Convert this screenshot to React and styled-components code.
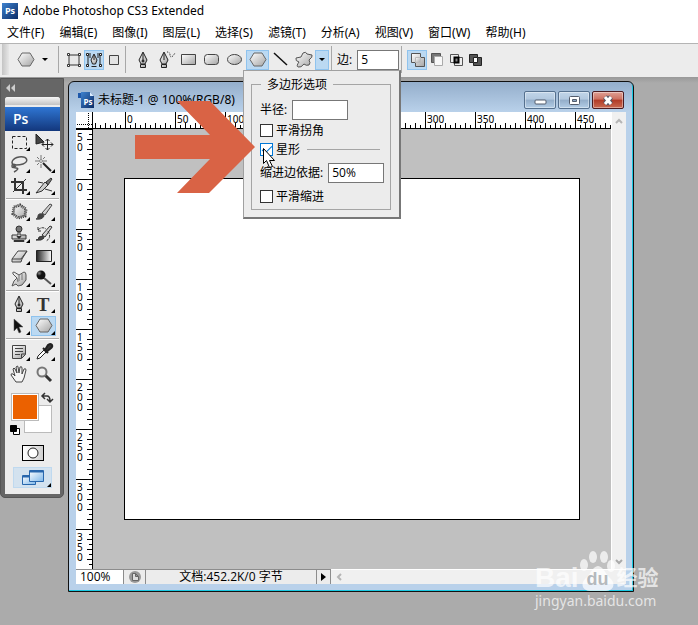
import React from 'react';
import styled, { createGlobalStyle, css } from 'styled-components';

const GlobalStyle = createGlobalStyle`
    * {
        box-sizing: border-box;
    }

    body {
        margin: 0;
        background: #ababab;
        color: #000;
        font-family: 'Open Sans', 'Noto Sans CJK SC', sans-serif;
        font-size: 12px;
        line-height: 16px;
    }

    button, input {
        font: inherit;
        color: inherit;
    }
`;

const Page = styled.div`
    display: flex;
    flex-direction: column;
    min-height: 100vh;
    overflow: hidden;
    position: relative;
`;

const Defs = styled.svg`
    position: absolute;
    width: 0;
    height: 0;
`;

const Icon = styled.svg`
    display: block;
    flex: none;
    overflow: visible;
`;

/* ---------- title and menu ---------- */

const TitleBar = styled.header`
    display: flex;
    align-items: center;
    gap: 5px;
    height: 22px;
    padding: 0 2px;
    background: #fff;
`;

const AppTitle = styled.h1`
    margin: 0;
    font-family: 'Noto Sans', sans-serif;
    font-size: 12px;
    font-weight: 400;
`;

const MenuBar = styled.nav`
    display: flex;
    gap: 15px;
    height: 21px;
    padding: 0 7px;
    background: #fff;
    font-family: 'Noto Sans', 'Noto Sans CJK SC', sans-serif;
`;

const MenuItem = styled.button`
    border: 0;
    padding: 0;
    background: none;
    white-space: nowrap;
`;

/* ---------- options bar ---------- */

const OptionsBar = styled.div`
    display: flex;
    align-items: center;
    height: 34px;
    border-top: 1px solid #b4b4b4;
    padding-bottom: 2px;
    background: #ececec;
    position: relative;
    z-index: 2;
`;

const Grip = styled.div`
    width: 7px;
    height: 100%;
    margin-left: 2px;
    background: linear-gradient(90deg, #c4c4c4, #e6e6e6);
`;

const Divider = styled.span`
    width: 1px;
    height: 27px;
    margin: 0 5px 0 2px;
    background: #a8a8a8;
`;

const PresetButton = styled.button`
    display: flex;
    align-items: center;
    gap: 7px;
    width: 47px;
    height: 20px;
    border: 0;
    padding: 0 0 0 8px;
    background: none;
`;

const Tool = styled.button`
    display: flex;
    align-items: center;
    justify-content: center;
    flex: none;
    width: ${({ $w }) => $w || 23}px;
    height: ${({ $h }) => $h || 20}px;
    border: 1px solid transparent;
    padding: 0;
    background: none;
    position: relative;
    ${({ $active }) =>
        $active &&
        css`
            border-color: #8fc3ee;
            background: #bbd9f2;
        `}
`;

const SidesLabel = styled.label`
    display: flex;
    align-items: center;
    gap: 5px;
`;

const NumberInput = styled.input`
    width: ${({ $w }) => $w}px;
    height: 20px;
    border: 1px solid #777;
    padding: 0 3px;
    background: #fff;
`;

const PopupAnchor = styled.div`
    position: relative;
`;

const Popup = styled.div`
    position: absolute;
    top: 20px;
    left: -3px;
    width: 158px;
    border: 1px solid #a0a0a0;
    border-right: 2px solid #777;
    border-bottom: 2px solid #777;
    padding: 6px 8px 7px 7px;
    background: #ececec;
`;

const Options = styled.fieldset`
    min-width: 0;
    margin: 0;
    border: 1px solid #a5a5a5;
    padding: 8px 6px 4px 8px;
`;

const Legend = styled.legend`
    margin-left: 1px;
    padding: 0 6px;
`;

const Row = styled.div`
    display: flex;
    align-items: center;
    gap: 5px;
    height: ${({ $h }) => $h}px;
    white-space: nowrap;
`;

const CheckLabel = styled.label`
    display: flex;
    align-items: center;
    gap: 3px;
`;

const Check = styled.input`
    appearance: none;
    width: 13px;
    height: 13px;
    margin: 0;
    border: 1px solid #333;
    background: #fff;

    &:checked {
        border-color: #0078d7;
    }

    &:checked::after {
        content: '';
        display: block;
        width: 9px;
        height: 4px;
        margin: 2px 1px;
        border: solid #0078d7;
        border-width: 0 0 1px 1px;
        transform: rotate(-45deg);
    }
`;

const Line = styled.span`
    flex: 1;
    height: 1px;
    margin: 0 4px 0 2px;
    background: #a5a5a5;
`;

/* ---------- workspace ---------- */

const Workspace = styled.main`
    display: flex;
    flex: 1;
    align-items: flex-start;
    padding-right: 64px;
    background: linear-gradient(#999, #ababab 6px);
`;

const Toolbox = styled.aside`
    flex: none;
    width: 64px;
    margin-top: 1px;
    border: 1px solid #555;
    border-radius: 0 0 5px 5px;
    padding: 0 3px 3px 4px;
    background: #666;
`;

const Collapse = styled.button`
    display: flex;
    align-items: center;
    width: 100%;
    height: 18px;
    border: 0;
    padding: 0 1px;
    background: none;
`;

const ToolPanel = styled.div`
    padding-bottom: 6px;
    background: #ececec;
    border-radius: 3px 3px 0 0;
`;

const PanelGrip = styled.div`
    height: 8px;
    border-radius: 3px 3px 0 0;
    background: linear-gradient(#f6f6f6, #c4c4c4);
`;

const Brand = styled.div`
    height: 24px;
    margin-top: 2px;
    padding-left: 8px;
    background: linear-gradient(#2f76d3, #13377c);
    color: #fff;
    font-size: 14px;
    font-weight: 600;
    line-height: 24px;
`;

const ToolGrid = styled.div`
    display: grid;
    grid-template-columns: 25px 25px;
    grid-auto-rows: 22px;
    padding-left: 1px;
    align-items: center;
`;

const Rule = styled.div`
    height: 2px;
    margin: 1px;
    border-top: 1px solid #aaa;
    background: #fff;
`;

const Corner = styled.i`
    position: absolute;
    right: 0;
    bottom: 0;
    border: 2px solid #000;
    border-top-color: transparent;
    border-left-color: transparent;
`;

const Swatches = styled.div`
    position: relative;
    height: 48px;
    margin: 5px 0 7px 7px;
`;

const Swatch = styled.button`
    position: absolute;
    top: ${({ $top }) => $top}px;
    left: ${({ $left }) => $left}px;
    width: 28px;
    height: 28px;
    border: 1px solid #bbb;
    padding: 0;
    background: ${({ $color }) => $color};
    box-shadow: inset 0 0 0 1px #fff;
`;

const SwatchAction = styled.button`
    position: absolute;
    top: ${({ $top }) => $top}px;
    left: ${({ $left }) => $left}px;
    border: 0;
    padding: 0;
    background: none;
`;

const MaskButton = styled.button`
    display: flex;
    align-items: center;
    justify-content: center;
    width: 22px;
    height: 16px;
    margin: 0 auto 6px;
    border: 1px solid #000;
    padding: 0;
    background: linear-gradient(90deg, #fff, #d0d0d0);
`;

const ScreenButton = styled.button`
    display: flex;
    align-items: center;
    justify-content: center;
    position: relative;
    width: 39px;
    height: 21px;
    margin: 0 auto;
    border: 1px solid #bfd9ef;
    padding: 0;
    background: #d3e2ef;
`;

/* ---------- document window ---------- */

const DocWindow = styled.section`
    flex: 1;
    min-width: 0;
    margin: 4px 0 0 4px;
    border: 1px solid #111;
    border-radius: 6px 6px 0 0;
    padding: 0 7px 7px;
    background: linear-gradient(#94aecb, #b9d1ea 30px);
    box-shadow: inset -1px -1px #19c8e2;
`;

const DocTitle = styled.div`
    display: flex;
    align-items: center;
    gap: 4px;
    height: 30px;
    padding: 6px 2px 0;
`;

const DocName = styled.h2`
    flex: 1;
    margin: 0;
    font-family: 'Noto Sans', 'Noto Sans CJK SC', sans-serif;
    font-size: 12px;
    font-weight: 400;
    white-space: nowrap;
`;

const WindowButtons = styled.div`
    display: flex;
    gap: 2px;
`;

const WindowButton = styled.button`
    display: flex;
    align-items: center;
    justify-content: center;
    width: 32px;
    height: 18px;
    border: 1px solid ${({ $close }) => ($close ? '#4b1b20' : '#55708e')};
    border-radius: 2px;
    padding: 0;
    background: ${({ $close }) =>
        $close
            ? 'linear-gradient(#dfa095, #cd7060 45%, #b13a26 50%, #c96a52)'
            : 'linear-gradient(#c1d5e9, #b2c8df 45%, #93adc9 50%, #b3cde6)'};
    box-shadow: inset 0 0 0 1px rgba(255, 255, 255, 0.4);
`;

const DocGrid = styled.div`
    display: grid;
    grid-template-columns: 17px 1fr 15px;
    grid-template-rows: 17px auto;
`;

const RulerCorner = styled.div`
    border-right: 1px solid #000;
    border-bottom: 1px solid #000;
    background: #fff;
`;

const RulerTop = styled.div`
    display: flex;
    overflow: hidden;
    border-bottom: 1px solid #000;
    background: #fff;
`;

const TopSegment = styled.div`
    flex: none;
    width: ${({ $lead }) => ($lead ? 32 : 50)}px;
    padding-left: 1px;
    border-left: ${({ $lead }) => ($lead ? 0 : 1)}px solid #000;
    background-image: linear-gradient(90deg, #000 1px, transparent 1px),
        linear-gradient(90deg, transparent 5px, #000 5px, #000 6px, transparent 6px);
    background-origin: border-box;
    background-repeat: repeat-x;
    background-size: 10px 5px, 10px 3px;
    background-position: ${({ $lead }) => ($lead ? 'right bottom' : 'left bottom')};
    font-family: 'Noto Sans', sans-serif;
    font-size: 10px;
    line-height: 14px;
`;

const RulerLeft = styled.div`
    height: 440px;
    overflow: hidden;
    border-right: 1px solid #000;
    background: #fff;
`;

const LeftSegment = styled.div`
    height: 50px;
    padding: 2px 0 0 1px;
    border-top: 1px solid #000;
    background-image: linear-gradient(#000 1px, transparent 1px),
        linear-gradient(transparent 5px, #000 5px, #000 6px, transparent 6px);
    background-origin: border-box;
    background-repeat: repeat-y;
    background-size: 5px 10px, 3px 10px;
    background-position: right top;
    font-family: 'Noto Sans', sans-serif;
    font-size: 10px;
    line-height: 10px;
`;

const Stage = styled.div`
    padding: 49px 31px;
    overflow: hidden;
    background: #c0c0c0;
`;

const Artboard = styled.div`
    width: 456px;
    height: 342px;
    border: 1px solid #000;
    background: #fff;
`;

const ScrollColumn = styled.div`
    display: flex;
    flex-direction: column;
    justify-content: space-between;
    align-items: center;
    grid-row: 1 / 3;
    grid-column: 3;
    padding: 6px 0 4px;
    border-left: 1px solid #fff;
    background: #f0f0f0;
`;

const ScrollButton = styled.button`
    border: 0;
    padding: 0;
    background: none;
`;

const StatusBar = styled.footer`
    display: flex;
    height: 15px;
    background: #f0f0f0;
`;

const StatusCell = styled.div`
    display: flex;
    align-items: center;
    justify-content: center;
    flex: none;
    width: ${({ $w }) => $w}px;
    border-top: 1px solid #8c8c8c;
    border-right: 1px solid #8c8c8c;
    background: #ececec;
    white-space: nowrap;
`;

const ZoomInput = styled.input`
    width: 48px;
    border: 1px solid #8c8c8c;
    border-width: 1px 1px 0 0;
    padding: 0 4px;
    background: #fff;
`;

const HScroll = styled.div`
    display: flex;
    align-items: center;
    flex: 1;
    padding-left: 5px;
    border-top: 1px solid #fff;
`;

/* ---------- overlays ---------- */

const Overlay = styled.svg`
    position: absolute;
    top: 0;
    left: 0;
    z-index: 3;
    pointer-events: none;
`;

const Watermark = styled.div`
    position: absolute;
    top: 550px;
    left: 535px;
    z-index: 3;
    color: rgba(255, 255, 255, 0.7);
    pointer-events: none;
`;

const MarkRow = styled.div`
    display: flex;
    align-items: flex-end;
    height: 42px;
    font-family: 'Liberation Sans', 'Noto Sans CJK SC', sans-serif;
    font-size: 28px;
    font-weight: 700;
    line-height: 28px;
`;

const Paw = styled.span`
    display: block;
    position: relative;
    width: 38px;
    height: 42px;
`;

const PawText = styled.span`
    position: absolute;
    right: 0;
    bottom: 4px;
    left: 0;
    color: #b5b9bd;
    font-size: 18px;
    line-height: 18px;
    text-align: center;
`;

const MarkName = styled.span`
    font-size: 21px;
    line-height: 28px;
`;

const MarkUrl = styled.div`
    font-family: 'Noto Sans', sans-serif;
    font-size: 14px;
    line-height: 18px;
`;

/* ---------- drawings ---------- */

const HEX = 'M5 1h8l4 6.5-4 6.5H5L1 7.5z';

const art = {
    hexagon: <path d={HEX} transform="translate(0 1)" fill="url(#metal)" stroke="#666" />,
    layers: (
        <g fill="#fff" stroke="#333">
            <path d="M4 4h10v10H4z" fill="#e8e8e8" />
            <path d="M2.5 2.5h2v2h-2zM13.5 2.5h2v2h-2zM2.5 13.5h2v2h-2zM13.5 13.5h2v2h-2z" />
        </g>
    ),
    paths: (
        <g fill="none" stroke="#222">
            <path d="M3 4v10M15 4v10M4 3h2M12 3h2" />
            <path d="M1.5 2.5h2v2h-2zM14.5 2.5h2v2h-2zM1.5 13.5h2v2h-2zM14.5 13.5h2v2h-2z" fill="#fff" />
            <path d="M9 3l-3 6 1.500 4h3L12 9z" fill="url(#metal)" />
            <path d="M9 4v5M6.500 15.500h5M5 4v3M13 4v3" />
        </g>
    ),
    fill: <path d="M4.500 4.500h9v9h-9z" fill="#e4e4e4" stroke="#444" />,
    pen: (
        <g fill="url(#metal)" stroke="#222">
            <path d="M9 1L5 9l2 4h4l2-4z" />
            <path d="M9 2v7M6.500 13.500h5v3h-5z" />
            <circle cx="9" cy="10" r="1" fill="#222" />
        </g>
    ),
    freePen: (
        <g fill="url(#metal)" stroke="#222">
            <path d="M7 1L3 9l2 4h4l2-4z" />
            <path d="M7 2v7M4.500 13.500h5v3h-5z" />
            <path d="M10 1q3 0 3 3t3 1l2-3" fill="none" strokeDasharray="1 1" />
        </g>
    ),
    rect: <path d="M1.500 3.500h14v10h-14z" fill="url(#metal)" stroke="#444" />,
    rrect: <rect x="1.500" y="3.500" width="14" height="10" rx="3" fill="url(#metal)" stroke="#444" />,
    ellipse: <ellipse cx="8.500" cy="8.500" rx="7" ry="5" fill="url(#metal)" stroke="#444" />,
    line: <path d="M2 2l13 12" stroke="#111" strokeWidth="1.500" />,
    custom: (
        <path
            d="M8 2q3-2 4 1l5 1q1 2-3 5 2 3 0 5-3 1-5-1-3 4-6 3-2-1 1-5-4-1-3-4l5-1z"
            fill="url(#metal)"
            stroke="#555"
        />
    ),
    add: (
        <g fill="url(#metal)" stroke="#555">
            <path d="M3.500 2.500h9v4h4v9h-9v-4h-4z" />
            <path d="M7.500 6.500h5v5h-5z" stroke="#bbb" />
        </g>
    ),
    subtract: (
        <g stroke="#555">
            <path d="M3.500 11.500v-9h9v3h-6v6z" fill="#777" />
            <path d="M6.500 5.500h8v9h-8z" fill="#f8f8f8" stroke="#aaa" />
        </g>
    ),
    intersect: (
        <g fill="#eee" stroke="#555">
            <path d="M3.500 3.500h8v8h-8zM7.500 6.500h8v8h-8z" />
            <path d="M7.500 6.500h4v5h-4z" fill="#888" stroke="#000" strokeWidth="2" />
        </g>
    ),
    exclude: (
        <g stroke="#222" fill="#555">
            <path d="M3.500 3.500h8v8h-8zM7.500 6.500h8v8h-8z" />
            <path d="M7.500 6.500h4v5h-4z" fill="#fff" />
        </g>
    ),
    marquee: <path d="M2.500 3.500h14v12h-14z" fill="none" stroke="#222" strokeDasharray="3 2" />,
    move: (
        <g>
            <path d="M1 1l8 8-8 2z" fill="#444" stroke="#222" />
            <path d="M12.500 6v11M7 11.500h11M10.500 8l2-2 2 2M10.500 15l2 2 2-2M9 9.500l-2 2 2 2M16 9.500l2 2-2 2" fill="none" stroke="#222" />
        </g>
    ),
    lasso: (
        <path
            d="M5 11C-1 8 3 3 9 2c9-1 10 5 4 7-3 1-6 1-7 1-3 0-3 3 0 3s2 2-2 4M6 10q-4-2-4 1t4 0"
            fill="none"
            stroke="#555"
            strokeWidth="1.500"
        />
    ),
    wand: (
        <g stroke="#222">
            <path d="M8 8l8 8" strokeWidth="2" />
            <path d="M6 0v4M6 9v4M0 6h4M8 6h4M2 2l2 2M10 2L8 4M2 10l2-2" stroke="#777" />
            <circle cx="6" cy="6" r="1.500" fill="#ddd" stroke="#888" />
        </g>
    ),
    crop: (
        <g fill="none" stroke="#333">
            <path d="M5 1v12h12M1 5h12v12" strokeWidth="2" />
            <path d="M3 15L16 2" />
        </g>
    ),
    slice: (
        <g stroke="#333">
            <path d="M1 16L10 5l3 3-6 6z" fill="url(#metal)" />
            <path d="M11 5l5-4 1 1-4 6z" fill="#777" />
            <path d="M3 5l5 1M10 12l7 2" fill="none" />
        </g>
    ),
    patch: (
        <g>
            <path d="M4 4l6-2 6 4-1 7-7 2-5-4z" fill="url(#metal)" />
            <path d="M4 4l6-2 6 4-1 7-7 2-5-4z" fill="none" stroke="#333" strokeWidth="3" strokeDasharray="1 1" />
            <path d="M4 4l6-2 6 4-1 7-7 2-5-4z" fill="none" stroke="#777" />
        </g>
    ),
    brush: (
        <g stroke="#444">
            <path d="M7 10l8-9 2 1-7 10z" fill="url(#metal)" />
            <path d="M1 16q2 0 2-3t5-2l1 2q-2 4-8 3z" fill="#444" />
        </g>
    ),
    stamp: (
        <g fill="url(#metal)" stroke="#333">
            <circle cx="9" cy="4" r="3" fill="#777" />
            <path d="M8 7h2v3h6v4H2v-4h6z" />
            <path d="M4 15.500h10v1H4z" fill="#222" />
            <path d="M7 11.500h4l-2 2z" fill="#111" />
        </g>
    ),
    history: (
        <g stroke="#333" fill="none">
            <path d="M7 10l8-9 2 1-7 10z" fill="url(#metal)" />
            <path d="M1 15q3 0 3-3l4-1 1 2q-2 3-8 2z" fill="#444" />
            <path d="M3 5q4-4 8-1M3 2v4h4M13 6q4 7-2 10" strokeDasharray="3 1" />
        </g>
    ),
    eraser: (
        <g stroke="#444">
            <path d="M2 12l6-8h9l-5 8-1 3H2z" fill="url(#metal)" />
            <path d="M2 12h9l6-8" fill="none" />
        </g>
    ),
    gradient: <path d="M1.500 3.500h15v11h-15z" fill="url(#fade)" stroke="#222" />,
    smudge: (
        <g>
            <path
                d="M2 17l2-5 3-3-4-4q-1-2 1-2l5 3 5-3q2 0 2 3v5l-4 5-4 1-2-2z"
                fill="url(#metal)"
                stroke="#555"
            />
            <path d="M9 6v6M12 5v6M7 9l1 4" stroke="#777" />
        </g>
    ),
    dodge: (
        <g>
            <path d="M9 9l7 6" stroke="#555" strokeWidth="2" />
            <circle cx="6" cy="6" r="4.500" fill="url(#ball)" />
        </g>
    ),
    text: <text x="8" y="16" textAnchor="middle" fontFamily="Liberation Serif" fontWeight="700" fontSize="19" fill="#333">T</text>,
    select: <path d="M4 2v12l3-3 2 5 2-1-2-5h4z" fill="#111" stroke="#555" strokeWidth="0.500" />,
    note: (
        <g stroke="#444">
            <path d="M2.500 2.500h13v9l-4 4h-9z" fill="url(#metal)" />
            <path d="M5 5.500h8M5 8.500h8M5 11.500h5M11.500 15v-4h4" fill="none" />
        </g>
    ),
    dropper: (
        <g stroke="#222">
            <path d="M2 16l1-3 6-6 2 2-6 6z" fill="#fff" />
            <path d="M8 5l5 5M10 7l3-5q3-2 4 0t-2 4l-4 3z" fill="#333" strokeWidth="2" />
        </g>
    ),
    hand: (
        <path
            d="M6 17l-5-7q0-2 2-1l2 2-2-7q1-2 2 0l2 4-1-6q2-2 2 0l1 6 1-6q2-1 2 1v6l2-5q2-1 2 1l-2 8-2 4z"
            fill="#f5f5f5"
            stroke="#444"
        />
    ),
    zoom: (
        <g>
            <path d="M10 10l6 6" stroke="#333" strokeWidth="3" />
            <circle cx="7" cy="7" r="4.500" fill="#eee" stroke="#777" strokeWidth="2" />
        </g>
    ),
    swap: <path d="M1 4h5q3 0 3 5M4 1L1 4l3 3M6 7l3 3 3-3" fill="none" stroke="#333" strokeWidth="1.500" />,
    reset: (
        <g stroke="#000">
            <path d="M3.500 3.500h6v6h-6z" fill="#fff" />
            <path d="M.5.5h6v6h-6z" />
        </g>
    ),
    mask: <circle cx="6" cy="6" r="5" fill="#fff" stroke="#222" />,
    screens: (
        <g stroke="#2867ad">
            <path d="M.5 6.500h13v9H.5z" fill="url(#sky)" />
            <path d="M7.500 1.500h14v11h-14z" fill="url(#sky)" />
            <path d="M1 7.500h6M8 2.500h13" strokeWidth="2" />
        </g>
    ),
    down: <path d="M0 0h6L3 3z" fill="#000" />,
    collapse: <path d="M4 0v8L0 4zM9 0v8L5 4z" fill="#ccc" />,
    minimize: <rect x="1" y="5" width="11" height="4" rx="1" fill="#fff" stroke="#535c6c" />,
    restore: (
        <g fill="#fff" stroke="#535c6c">
            <rect x="1.500" y=".5" width="10" height="8" rx="1" />
            <path d="M4.500 3.500h4v2h-4z" fill="#8da7c3" />
        </g>
    ),
    close: (
        <g fill="none">
            <path d="M3 1l6 7M9 1L3 8" stroke="#535666" strokeWidth="5" />
            <path d="M3 1l6 7M9 1L3 8" stroke="#fff" strokeWidth="3" />
        </g>
    ),
    clip: (
        <g>
            <circle cx="6" cy="6" r="6" fill="#999" />
            <path d="M3.500 2.500h3l3 3v4h-6zM6.500 2.500v3h3" fill="#ddd" stroke="#666" />
        </g>
    ),
    play: <path d="M0 0v8l5-4z" fill="#000" />,
    up: <path d="M1 5l3-3 3 3" fill="none" stroke="#b5b5b5" strokeWidth="2" />,
    downArrow: <path d="M1 1l3 3 3-3" fill="none" stroke="#aaa" strokeWidth="2" />,
    left: <path d="M5 1L2 4l3 3" fill="none" stroke="#b5b5b5" strokeWidth="2" />,
    dots: <path d="M12.500 1v15M1 12.500h15" stroke="#000" strokeDasharray="1 1" />,
    app: (
        <g>
            <path d="M0 0h16v16H0z" fill="url(#blue)" />
            <text x="8" y="11" textAnchor="middle" fontFamily="Open Sans" fontWeight="700" fontSize="9" fill="#fff">Ps</text>
        </g>
    ),
    doc: (
        <g>
            <path d="M0 1h9v5H0z" fill="#1e58ab" />
            <path d="M3 0h9l4 4v12H3z" fill="url(#blue)" />
            <path d="M12 0v4h4z" fill="#dcecff" />
            <text x="10" y="13" textAnchor="middle" fontFamily="Open Sans" fontWeight="700" fontSize="8" fill="#fff">Ps</text>
        </g>
    ),
};

const Art = ({ name, w = 18, h = 18 }) => (
    <Icon width={w} height={h} viewBox={`0 0 ${w} ${h}`} aria-hidden="true">
        {art[name]}
    </Icon>
);

const menus = [
    '文件(F)', '编辑(E)', '图像(I)', '图层(L)', '选择(S)',
    '滤镜(T)', '分析(A)', '视图(V)', '窗口(W)', '帮助(H)',
];

const toolGroups = [
    ['marquee', 'move', 'lasso', 'wand', 'crop', 'slice'],
    ['patch', 'brush', 'stamp', 'history', 'eraser', 'gradient', 'smudge', 'dodge'],
    ['pen', 'text', 'select', 'hexagon'],
    ['note', 'dropper', 'hand', 'zoom'],
];

const noFlyout = ['move', 'hand', 'zoom'];

const topMarks = [0, 50, 100, 150, 200, 250, 300, 350, 400, 450];
const leftMarks = [50, 0, 50, 100, 150, 200, 250, 300, 350];

const PolygonOptions = () => (
    <Popup>
        <Options>
            <Legend>多边形选项</Legend>
            <Row $h={18}>
                <label htmlFor="radius">半径:</label>
                <NumberInput id="radius" $w={56} defaultValue="" />
            </Row>
            <Row $h={24}>
                <CheckLabel>
                    <Check type="checkbox" />
                    平滑拐角
                </CheckLabel>
            </Row>
            <Row $h={14}>
                <CheckLabel>
                    <Check type="checkbox" defaultChecked />
                    星形
                </CheckLabel>
                <Line />
            </Row>
            <Row $h={32}>
                <label htmlFor="indent">缩进边依据:</label>
                <NumberInput id="indent" $w={56} defaultValue="50%" />
            </Row>
            <Row $h={16}>
                <CheckLabel>
                    <Check type="checkbox" />
                    平滑缩进
                </CheckLabel>
            </Row>
        </Options>
    </Popup>
);

const Tools = () => (
    <Toolbox>
        <Collapse aria-label="collapse">
            <Art name="collapse" w={10} h={8} />
        </Collapse>
        <ToolPanel>
            <PanelGrip />
            <Brand>Ps</Brand>
            {toolGroups.map((group, i) => (
                <React.Fragment key={group[0]}>
                    {i > 0 && <Rule />}
                    <ToolGrid>
                        {group.map((name) => (
                            <Tool key={name} $w={25} $h={20} $active={name === 'hexagon'} aria-label={name}>
                                <Art name={name} />
                                {!noFlyout.includes(name) && <Corner />}
                            </Tool>
                        ))}
                    </ToolGrid>
                </React.Fragment>
            ))}
            <Swatches>
                <Swatch $top={15} $left={12} $color="#fff" aria-label="background" />
                <Swatch $top={3} $left={-1} $color="#eb6100" aria-label="foreground" />
                <SwatchAction $top={2} $left={29} aria-label="swap">
                    <Art name="swap" w={12} h={11} />
                </SwatchAction>
                <SwatchAction $top={35} $left={-2} aria-label="reset">
                    <Art name="reset" w={10} h={10} />
                </SwatchAction>
            </Swatches>
            <MaskButton aria-label="quick mask">
                <Art name="mask" w={12} h={12} />
            </MaskButton>
            <ScreenButton aria-label="screen mode">
                <Art name="screens" w={22} h={17} />
                <Corner />
            </ScreenButton>
        </ToolPanel>
    </Toolbox>
);

const DocumentWindow = () => (
    <DocWindow>
        <DocTitle>
            <Art name="doc" w={16} h={16} />
            <DocName>未标题-1 @ 100%(RGB/8)</DocName>
            <WindowButtons>
                <WindowButton aria-label="minimize"><Art name="minimize" w={13} h={10} /></WindowButton>
                <WindowButton aria-label="restore"><Art name="restore" w={13} h={9} /></WindowButton>
                <WindowButton $close aria-label="close"><Art name="close" w={12} h={9} /></WindowButton>
            </WindowButtons>
        </DocTitle>
        <DocGrid>
            <RulerCorner><Art name="dots" w={16} h={16} /></RulerCorner>
            <RulerTop>
                <TopSegment $lead />
                {topMarks.map((mark) => (
                    <TopSegment key={mark}>{mark}</TopSegment>
                ))}
            </RulerTop>
            <RulerLeft>
                {leftMarks.map((mark, i) => (
                    <LeftSegment key={i}>
                        {String(mark).split('').map((digit, n) => (
                            <div key={n}>{digit}</div>
                        ))}
                    </LeftSegment>
                ))}
            </RulerLeft>
            <Stage>
                <Artboard />
            </Stage>
            <ScrollColumn>
                <ScrollButton aria-label="scroll up"><Art name="up" w={8} h={6} /></ScrollButton>
                <ScrollButton aria-label="scroll down"><Art name="downArrow" w={8} h={6} /></ScrollButton>
            </ScrollColumn>
        </DocGrid>
        <StatusBar>
            <ZoomInput aria-label="zoom" defaultValue="100%" />
            <StatusCell $w={22}><Art name="clip" w={12} h={12} /></StatusCell>
            <StatusCell $w={171}>文档:452.2K/0 字节</StatusCell>
            <StatusCell $w={14}><Art name="play" w={5} h={8} /></StatusCell>
            <HScroll>
                <ScrollButton aria-label="scroll left"><Art name="left" w={8} h={8} /></ScrollButton>
            </HScroll>
        </StatusBar>
    </DocWindow>
);

const App = () => {
    return (
        <Page>
            <GlobalStyle />
            <Defs aria-hidden="true">
                <defs>
                    <linearGradient id="metal" x2="1" y2="1">
                        <stop stopColor="#fff" />
                        <stop offset="1" stopColor="#a4a4a4" />
                    </linearGradient>
                    <linearGradient id="fade">
                        <stop stopColor="#222" />
                        <stop offset="1" stopColor="#fff" />
                    </linearGradient>
                    <linearGradient id="blue" x2="1" y2="1">
                        <stop stopColor="#3e82cf" />
                        <stop offset="1" stopColor="#0b2c66" />
                    </linearGradient>
                    <linearGradient id="sky" x2="1" y2="1">
                        <stop stopColor="#fff" />
                        <stop offset="1" stopColor="#7fb8ea" />
                    </linearGradient>
                    <radialGradient id="ball" cx=".3" cy=".3">
                        <stop stopColor="#888" />
                        <stop offset=".6" stopColor="#111" />
                    </radialGradient>
                </defs>
            </Defs>

            <TitleBar>
                <Art name="app" w={16} h={16} />
                <AppTitle>Adobe Photoshop CS3 Extended</AppTitle>
            </TitleBar>
            <MenuBar>
                {menus.map((menu) => (
                    <MenuItem key={menu}>{menu}</MenuItem>
                ))}
            </MenuBar>

            <OptionsBar>
                <Grip />
                <PresetButton aria-label="presets">
                    <Art name="hexagon" />
                    <Art name="down" w={6} h={3} />
                </PresetButton>
                <Divider />
                <Tool $w={20} aria-label="shape layers"><Art name="layers" /></Tool>
                <Tool $w={20} $active aria-label="paths"><Art name="paths" /></Tool>
                <Tool $w={19} aria-label="fill pixels"><Art name="fill" /></Tool>
                <Divider />
                <Tool aria-label="pen"><Art name="pen" /></Tool>
                <Tool aria-label="freeform pen"><Art name="freePen" /></Tool>
                <Tool aria-label="rectangle"><Art name="rect" /></Tool>
                <Tool aria-label="rounded rectangle"><Art name="rrect" /></Tool>
                <Tool aria-label="ellipse"><Art name="ellipse" /></Tool>
                <PopupAnchor>
                    <Tool $active aria-label="polygon"><Art name="hexagon" /></Tool>
                    <PolygonOptions />
                </PopupAnchor>
                <Tool aria-label="line"><Art name="line" /></Tool>
                <Tool aria-label="custom shape"><Art name="custom" /></Tool>
                <Tool $w={14} $active aria-label="geometry options"><Art name="down" w={6} h={3} /></Tool>
                <Divider />
                <SidesLabel>
                    边:
                    <NumberInput $w={42} defaultValue="5" />
                </SidesLabel>
                <Divider />
                <Tool $w={20} $active aria-label="add"><Art name="add" /></Tool>
                <Tool $w={19} aria-label="subtract"><Art name="subtract" /></Tool>
                <Tool $w={19} aria-label="intersect"><Art name="intersect" /></Tool>
                <Tool $w={19} aria-label="exclude"><Art name="exclude" /></Tool>
            </OptionsBar>

            <Workspace>
                <Tools />
                <DocumentWindow />
            </Workspace>

            <Overlay width="300" height="200" aria-hidden="true">
                <path
                    d="M135 135h75l-33-34h33l45 46-46 46h-32l33-34h-75z"
                    fill="#d96345"
                />
                <path
                    d="M263.500 148.500v15l3-3 3 7 3-1-3-6h5z"
                    fill="#fff"
                    stroke="#000"
                />
            </Overlay>

            <Watermark>
                <MarkRow>
                    Bai
                    <Paw>
                        <Icon width="38" height="42" viewBox="0 0 38 42" fill="currentColor">
                            <ellipse cx="5" cy="15" rx="4" ry="6" />
                            <ellipse cx="14" cy="7" rx="4" ry="6" />
                            <ellipse cx="25" cy="7" rx="4" ry="6" />
                            <ellipse cx="32" cy="16" rx="4" ry="6" />
                            <path d="M19 16c5 0 8 9 13 13 5 5 2 12-5 12H11c-7 0-10-7-5-12 5-4 8-13 13-13z" />
                        </Icon>
                        <PawText>du</PawText>
                    </Paw>
                    <MarkName>经验</MarkName>
                </MarkRow>
                <MarkUrl>jingyan.baidu.com</MarkUrl>
            </Watermark>
        </Page>
    );
};

export default App;
